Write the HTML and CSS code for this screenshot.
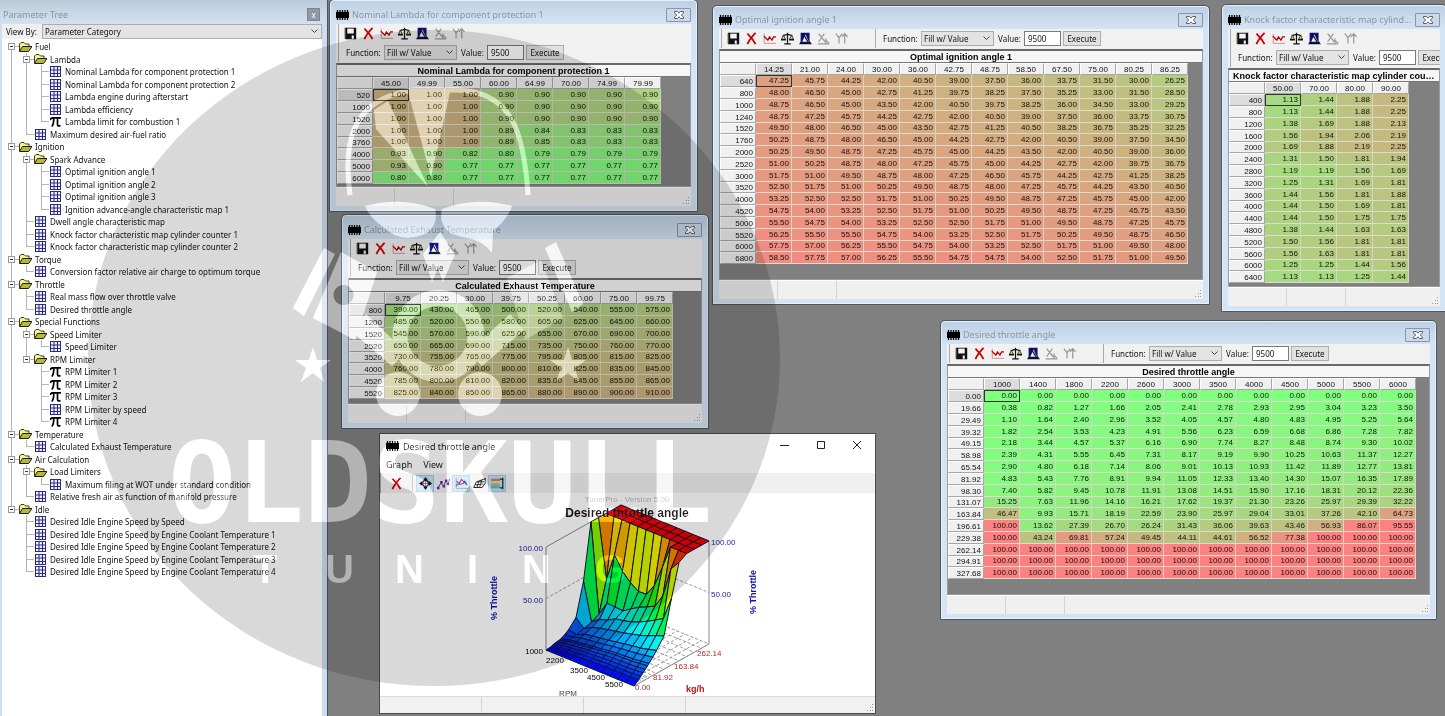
FILE: index.html
```html
<!DOCTYPE html>
<html lang="en">
<head>
  <meta charset="UTF-8" />
  <meta name="viewport" content="width=device-width, initial-scale=1.0"/>
  <title>TunerPro – Parameter Tree</title>
  <link rel="stylesheet" href="styles.css">
</head>
<body>

  <!-- icon set -->
  <svg class="sprite" aria-hidden="true">
    <symbol id="i-chip" viewBox="0 0 13 10"><path d="M0 2h13v6H0z"/><path d="M1.500 0v10M4 0v10M6.500 0v10M9 0v10M11.500 0v10" stroke="#000" stroke-width="1.300"/></symbol>
    <symbol id="i-save" viewBox="0 0 16 16"><path d="M1 1h14v14H2l-1-1z" fill="#111"/><path d="M4 2h8v6H4z" fill="#f4f4f4"/><path d="M1.500 2v12" stroke="#77772a"/><path d="M9.500 10.500h2.500v4H9.500z" fill="#fff"/></symbol>
    <symbol id="i-del" viewBox="0 0 16 16"><path d="M3 2c3 3 7 7 10 13M13 1C9 5 5 10 3 15" fill="none" stroke="#c80000" stroke-width="2.200"/></symbol>
    <symbol id="i-graph" viewBox="0 0 16 16"><path d="M1.500 2v12H16" fill="none" stroke="#c08080"/><path d="M1 5l3 3 2 2 2-4 3 4 2-4h3" fill="none" stroke="#b00000" stroke-width="1.500"/></symbol>
    <symbol id="i-scale" viewBox="0 0 16 16"><path d="M8 1v13M4 14.500h8M2 4.500l6-1.500 6 1.500" fill="none" stroke="#111" stroke-width="1.500"/><path d="M3 4L.5 9h5zM13 4l-2.500 5h5z" fill="#d8d878" stroke="#222"/><path d="M0 9.500h6M10 9.500h6" stroke="#111" stroke-width="2"/></symbol>
    <symbol id="i-metro" viewBox="0 0 16 16"><path d="M2 1h11v10l3 4H0l2-3z" fill="#101070"/><path d="M8 3l4 9H4z" fill="#f0f0fa"/><path d="M5 2l6 10" stroke="#111" stroke-width="1.500"/><path d="M2 13.500h12" stroke="#111" stroke-width="2"/></symbol>
    <symbol id="i-xaxis" viewBox="0 0 16 16"><path d="M2 2l8 10M9 2L2 12M1 14.500h14M11 8v6M11 10l4 4" fill="none" stroke="#979797" stroke-width="1.500"/></symbol>
    <symbol id="i-yaxis" viewBox="0 0 16 16"><path d="M1 2l4 5 4-5M5 7v7M12 14V3M8.500 6L12 2l3.500 4" fill="none" stroke="#979797" stroke-width="1.500"/></symbol>
    <symbol id="i-move" viewBox="0 0 16 16"><path d="M8 0l3 4H5zM8 16l3-4H5zM0 8l4-3v6zM16 8l-4-3v6z" fill="#111"/><circle cx="8" cy="8" r="3.500" fill="#fff" stroke="#111" stroke-width="1.500"/><path d="M8 5v6M5 8h6" stroke="#a02040"/></symbol>
    <symbol id="i-dots" viewBox="0 0 16 16"><path d="M1 14l4-7 3 5 3-8 2 5 3-7" fill="none" stroke="#7a2a8a" stroke-width="1.200"/><path d="M0 12h3v3H0zM4 5h3v3H4zM7 10h3v3H7zM10 3h3v3h-3zM12 7h3v3h-3z" fill="#5a2a9a"/></symbol>
    <symbol id="i-trace" viewBox="0 0 16 16"><path d="M1.500 1v13H16" fill="none" stroke="#666"/><path d="M1 11l4-3 3-5 3 3 3 3" fill="none" stroke="#b0204a" stroke-width="1.500"/><path d="M2 5l4 4 4-1 2-3 3 5" fill="none" stroke="#2a3ab0" stroke-width="1.500"/></symbol>
    <symbol id="i-mesh" viewBox="0 0 16 16"><path d="M4 6L15 2v6L11 13H1zM2 9.500l11-1M7 5l-2 8M11 3.500L8 13M4 6l10 0" fill="none" stroke="#222" stroke-width="1.300"/></symbol>
    <symbol id="i-legend" viewBox="0 0 16 16"><path d="M0 2h11v3H0z" fill="#d87878"/><path d="M0 5h11v3H0z" fill="#e6d870"/><path d="M0 8h11v3H0z" fill="#78cc88"/><path d="M0 11h11v3H0z" fill="#78a8dc"/><path d="M14.500 1v14M11 2.500h4M11 13.500h4" stroke="#222" stroke-width="1.500"/></symbol>
    <symbol id="i-close" viewBox="0 0 10 8"><path d="M.5 .5h3L5 2.200 6.500.5h3v1.500L7.200 4l2.300 2v1.500h-3L5 5.800 3.500 7.500h-3V6l2.300-2L.5 2z" fill="#fff" stroke="#555f6c"/></symbol>
    <symbol id="i-folder" viewBox="0 0 13 10"><path d="M.5 9V2L2 .5h3L6.500 2H10v2" fill="#f4f48a" stroke="#3c3c20"/><path d="M.5 9.500L3.500 4.500H13L9.500 9.500z" fill="#b8b83c" stroke="#1c1c10"/></symbol>
    <symbol id="i-table" viewBox="0 0 11 11"><path d="M0 0h11v11H0z" fill="#f2f2ff"/><path d="M.5 0v11M4 0v11M7.500 0v11" stroke="#1c1c9c"/><path d="M0 .5h11M0 4h11M0 7.500h11M0 10.500h11M10.500 0v11" stroke="#2c2c7c"/></symbol>
    <symbol id="i-pi" viewBox="0 0 11 11"><path d="M0 4C.8 1.800 1.500 1.800 3 1.800h8M3.800 2.500c0 4-.3 6-2 8M7.500 2.500V8c0 2 1 2.500 3 1.500" fill="none" stroke="#000" stroke-width="1.700"/></symbol>
    <symbol id="i-size" viewBox="0 0 8 8"><path d="M6 0h1v1H6zM4 3h1v1H4zM6 3h1v1H6zM1 6h1v1H1zM4 6h1v1H4zM6 6h1v1H6z" fill="#999"/></symbol>
  </svg>

  <aside class="tree-panel">
    <header class="tree-title">
      <h1>Parameter Tree</h1>
      <button type="button" aria-label="Close parameter tree">x</button>
    </header>
    <div class="view-by">
      <label for="viewBy">View By:</label>
      <select id="viewBy"><option>Parameter Category</option></select>
    </div>
    <ul class="tree" id="tree"></ul>
  </aside>

  <main class="desktop">
    <section class="window win-lambda" data-map="lambda"></section>
    <section class="window win-exhaust" data-map="exhaust"></section>
    <section class="window win-ignition wide" data-map="ignition"></section>
    <section class="window win-knock" data-map="knock"></section>
    <section class="window win-throttle wide" data-map="throttle"></section>

    <section class="graph-window">
      <header class="graph-title">
        <svg class="chip"><use href="#i-chip"/></svg>
        <h2>Desired throttle angle</h2>
        <button type="button" aria-label="Minimize"><svg viewBox="0 0 10 10"><path d="M0 5.500h9"/></svg></button>
        <button type="button" aria-label="Maximize"><svg viewBox="0 0 10 10"><path d="M1.500 1.500h7v7h-7z"/></svg></button>
        <button type="button" aria-label="Close"><svg viewBox="0 0 10 10"><path d="M1 1l8 8M9 1L1 9"/></svg></button>
      </header>
      <nav class="graph-menu"><a href="#graph">Graph</a><a href="#view">View</a></nav>
      <div class="graph-tools">
        <button type="button" aria-label="Close graph"><svg><use href="#i-del"/></svg></button>
        <span class="grip"></span>
        <button type="button" class="on" aria-label="Move"><svg><use href="#i-move"/></svg></button>
        <button type="button" aria-label="Points"><svg><use href="#i-dots"/></svg></button>
        <button type="button" class="on" aria-label="Trace"><svg><use href="#i-trace"/></svg></button>
        <button type="button" aria-label="Mesh"><svg><use href="#i-mesh"/></svg></button>
        <button type="button" class="on" aria-label="Colors"><svg><use href="#i-legend"/></svg></button>
      </div>
      <svg class="plot" id="plot" viewBox="0 0 495 203">
        <text class="version" x="247" y="9">TunerPro - Version 5.00</text>
        <g id="axes"></g>
        <g id="surface"></g>
        <text class="plot-title" x="247" y="24">Desired throttle angle</text>
        <g class="blue">
          <text class="end" x="163" y="58">100.00</text>
          <text class="end" x="163" y="110">50.00</text>
          <text x="331" y="52">100.00</text>
          <text x="331" y="104">50.00</text>
          <text class="axis-name" transform="translate(117 105) rotate(-90)">% Throttle</text>
          <text class="axis-name" transform="translate(376 99) rotate(-90)">% Throttle</text>
        </g>
        <g class="black">
          <text class="end" x="163" y="161">1000</text>
          <text class="mid" x="175" y="170">2200</text>
          <text class="mid" x="199" y="180">3500</text>
          <text class="mid" x="216" y="187">4500</text>
          <text class="mid" x="234" y="194">5500</text>
          <text class="mid rpm" x="188" y="203">RPM</text>
        </g>
        <g class="red">
          <text x="255" y="197">0.00</text>
          <text x="273" y="187">81.92</text>
          <text x="294" y="176">163.84</text>
          <text x="317" y="163">262.14</text>
          <text class="kgh" x="306" y="199">kg/h</text>
        </g>
      </svg>
      <footer class="graph-status"><span></span><span></span><span></span><svg class="size"><use href="#i-size"/></svg></footer>
    </section>
  </main>

  <!-- brand watermark over the whole screen: dark disc, then the light artwork -->
  <svg class="watermark disc" viewBox="88 30 692 656" aria-hidden="true">
    <mask id="holes" maskUnits="userSpaceOnUse" x="88" y="30" width="692" height="656">
      <rect x="88" y="30" width="692" height="656" fill="#fff"/>
      <use href="#brand" fill="#000" stroke="#000"/>
    </mask>
    <ellipse cx="434" cy="358" rx="346" ry="328" mask="url(#holes)"/>
  </svg>
  <svg class="watermark artwork" viewBox="88 30 692 656" aria-label="Oldskull Tuning">
    <g id="brand">
      <path d="M350 195C344 150 346 98 415 90H458C512 92 524 132 528 195" fill="none" stroke-width="5"/>
      <g stroke="none">
        <path d="M374 110l14-9 40 86-52-58zM408 92h42l-19 85z"/>
        <path d="M365 206q36-10 70 3 4 14-8 24-26 12-45-7-12-8-17-20zM512 206q-36-10-70 3-4 14 8 24l12 4q20 2 30 16l1-22q15-12 19-25z"/>
        <path d="M440 232l15 22-12 28-5-14-6 14-9-28z"/>
        <path d="M324 248l11 6-31 62-11-8zM545 248l11-6 27 62-11 8z"/>
        <path fill-rule="evenodd" d="M341 252l36 20-22 68-42-22zM343 285a10 10 0 1 0 1 0z"/>
        <path d="M541 260l-34 18 18 62 38-22z" opacity=".6"/>
        <path d="M350 330l16-16 40 38-14 14zM524 330l-14-16-42 38 14 14z"/>
        <path fill-rule="evenodd" d="M438 290a46 46 0 1 0 1 0zM438 306a30 30 0 1 1-1 0z"/>
        <circle cx="398" cy="394" r="22"/>
        <circle cx="480" cy="394" r="22"/>
        <path d="M313 347l4 13h14l-11 8 4 14-11-9-12 9 5-14-11-8h14zM568 347l4 13h14l-11 8 4 14-11-9-12 9 5-14-11-8h14z"/>
        <text class="oldskull" x="168" y="522">OLDSKULL</text>
        <text class="tuning" x="253 325 395 467 522 595" y="583">TUNING</text>
      </g>
    </g>
  </svg>

  <template id="mapWindow">
    <header class="window-title">
      <svg class="chip"><use href="#i-chip"/></svg>
      <h2></h2>
      <button type="button" aria-label="Close window"><svg><use href="#i-close"/></svg></button>
    </header>
    <div class="toolbars">
      <div class="toolbar icons">
        <button type="button" aria-label="Save"><svg><use href="#i-save"/></svg></button>
        <button type="button" aria-label="Discard"><svg><use href="#i-del"/></svg></button>
        <button type="button" aria-label="Graph"><svg><use href="#i-graph"/></svg></button>
        <button type="button" aria-label="Compare"><svg><use href="#i-scale"/></svg></button>
        <button type="button" aria-label="Trace"><svg><use href="#i-metro"/></svg></button>
        <button type="button" aria-label="X axis"><svg><use href="#i-xaxis"/></svg></button>
        <button type="button" aria-label="Y axis"><svg><use href="#i-yaxis"/></svg></button>
      </div>
      <div class="toolbar function">
        <label class="fn-label">Function:</label>
        <select><option>Fill w/ Value</option></select>
        <label class="value-label">Value:</label>
        <input type="text" value="9500">
        <button type="button" class="execute">Execute</button>
      </div>
    </div>
    <div class="grid">
      <h3></h3>
      <table><thead></thead><tbody></tbody></table>
    </div>
    <footer class="status"><span></span><span></span><svg class="size"><use href="#i-size"/></svg></footer>
  </template>

  <script src="script.js"></script>
</body>
</html>
```

FILE: styles.css
```css
* { box-sizing: border-box; margin: 0; padding: 0; }

body {
  display: flex;
  position: relative;
  min-height: 100vh;
  overflow: hidden;
  background: #808080;
  color: #111;
  font-family: "Noto Sans", "Open Sans", sans-serif;
  font-size: 8px;
}

button, input, select { font: inherit; color: inherit; }
button { border: none; background: none; }
h1, h2, h3 { font-weight: normal; }
.sprite { position: absolute; width: 0; height: 0; }

/* Parameter tree */
.tree-panel {
  display: flex;
  flex-direction: column;
  flex: none;
  width: 328px;
  padding: 0 5px 0 2px;
  background: #cfdeee;
  border-right: 1px solid #4c5460;
}

.tree-title {
  display: flex;
  align-items: center;
  justify-content: space-between;
  height: 24px;
  margin: 0 -5px 0 -2px;
  padding: 4px 7px 0 3px;
  background: linear-gradient(#bccbdb, #d3e1f0);
}

.tree-title h1 { color: #8a949f; font-size: 9px; }

.tree-title button {
  width: 13px;
  height: 13px;
  background: #8f98a3;
  border: 1px solid #7b8490;
  color: #fff;
  line-height: 9px;
}

.view-by { display: flex; align-items: center; height: 15px; background: #f0f0f0; }
.view-by label { width: 40px; padding-left: 4px; }

select {
  appearance: none;
  height: 15px;
  padding: 0 2px;
  border: 1px solid #adadad;
  border-radius: 0;
  background: #e3e3e3 url("data:image/svg+xml,%3Csvg xmlns='http://www.w3.org/2000/svg' width='7' height='5'%3E%3Cpath d='M.5 .5l3 3 3-3' fill='none' stroke='%23444'/%3E%3C/svg%3E") no-repeat right 3px center;
}

.view-by select { flex: 1; }

.tree { flex: 1; padding-top: 1px; background: #fff; list-style: none; }
.tree li { display: flex; align-items: center; height: 12px; padding-left: 2px; white-space: nowrap; }
.tree li:nth-child(odd) { height: 13px; }

.tree a { color: #111; text-decoration: none; padding-left: 4px; }
.tree svg { width: 11px; height: 11px; flex: none; margin-left: 1px; }
.tree svg.folder { width: 13px; height: 10px; margin: 0 -1px 0 0; }

.guide {
  display: flex;
  align-items: center;
  flex: none;
  width: 15px;
  height: 100%;
  padding-left: 4px;
  background-repeat: no-repeat;
}
.guide.line { background-image: linear-gradient(#b4b4b4, #b4b4b4); background-size: 1px 100%; background-position: 7px 0; }
.guide.tee, .guide.elbow, .guide.start {
  background-image: linear-gradient(#b4b4b4, #b4b4b4), linear-gradient(#b4b4b4, #b4b4b4);
  background-size: 1px 100%, 8px 1px;
  background-position: 7px 0, 7px 50%;
}
.guide.elbow { background-size: 1px 50%, 8px 1px; }
.guide.start { background-size: 1px 50%, 8px 1px; background-position: 7px 100%, 7px 50%; }

.toggle {
  width: 7px;
  height: 7px;
  background: linear-gradient(#333, #333) center / 3px 1px no-repeat #fff;
  border: 1px solid #9a9a9a;
}

/* Map windows */
.desktop { position: relative; flex: 1; min-width: 0; }

.window {
  position: absolute;
  display: flex;
  flex-direction: column;
  padding: 0 6px 5px;
  background: linear-gradient(#bccfe3, #d5e4f4 24px, #d5e4f4);
  border: 1px solid #4c5662;
  border-radius: 5px 5px 1px 1px;
  box-shadow: inset 0 0 0 1px #e6f0fa;
}

.win-lambda { left: 1px; top: -1px; width: 369px; height: 213px; }
.win-exhaust { left: 13px; top: 214px; width: 368px; height: 215px; }
.win-ignition { left: 384px; top: 5px; width: 498px; height: 300px; }
.win-knock { left: 893px; top: 4px; width: 226px; height: 308px; }
.win-throttle { left: 612px; top: 320px; width: 497px; height: 300px; }

.chip { width: 13px; height: 10px; flex: none; }

.window-title { display: flex; align-items: center; height: 23px; padding-top: 5px; gap: 3px; }
.win-lambda .window-title, .win-exhaust .window-title, .win-knock .window-title { height: 24px; }
.window-title h2 {
  flex: 1;
  overflow: hidden;
  color: #8b97a5;
  font-size: 9px;
  line-height: 12px;
  white-space: nowrap;
  text-overflow: ellipsis;
}
.window-title button {
  display: flex;
  align-items: center;
  justify-content: center;
  width: 25px;
  height: 14px;
  border: 1px solid #8796a8;
  border-radius: 1px;
  background: #c9d9ea;
}
.window-title button svg { width: 10px; height: 8px; }

.toolbars { padding-bottom: 1px; background: #f1f1f1; overflow: hidden; }
.wide .toolbars { display: flex; }
.toolbar { display: flex; align-items: center; flex: none; height: 19px; margin-left: 2px; padding-left: 2px; border-left: 1px solid #a8a8a8; }
.wide .icons { width: 152px; }
.icons button, .graph-tools button { display: flex; align-items: center; justify-content: center; width: 18px; height: 17px; flex: none; }
.icons svg, .graph-tools svg { width: 13px; height: 13px; }

.function { padding-left: 7px; white-space: nowrap; }
.function > * { flex: none; }
.fn-label { width: 38px; }
.function select { width: 73px; }
.value-label { width: 30px; padding-left: 4px; }
.function input { width: 37px; height: 15px; padding: 0 3px; border: 1px solid #7a7a7a; background: #fff; }
.execute { width: 38px; height: 15px; margin-left: 2px; border: 1px solid #adadad; background: #e1e1e1; line-height: 12px; }

.grid {
  flex: 1;
  overflow: hidden;
  background: #808080;
  border: 1px solid #9a9a9a;
  border-top: 2px solid #6a6a6a;
  font-family: "Liberation Sans", Arial, sans-serif;
}

.grid h3 {
  height: 12px;
  overflow: hidden;
  padding: 0 4px;
  background: #f6f6f6;
  border-bottom: 1px solid #777;
  color: #000;
  font-size: 9px;
  font-weight: bold;
  line-height: 12px;
  text-align: center;
  white-space: nowrap;
  text-overflow: ellipsis;
}

.grid table { border-collapse: separate; border-spacing: 0; table-layout: fixed; width: min-content; }
.grid th, .grid td { width: 36px; height: 12px; padding: 0 2px 0 0; line-height: 10px; text-align: right; font-weight: normal; white-space: nowrap; }
.grid tbody tr:nth-child(5n) > * { height: 11px; }
.grid th { background: #f0f0f0; border: 1px solid; border-color: #fdfdfd #a6a6a6 #a6a6a6 #fdfdfd; line-height: 9px; }
.grid thead th { text-align: center; padding: 0; }
.grid td { border-right: 1px solid #d4d4c8; border-bottom: 1px solid #dcdcd0; }
.grid .current { border: 1px solid #333; }
.grid th.marked { background: #dcdcdc; }

.status, .graph-status { display: flex; height: 19px; background: #f0f0f0; border-top: 1px solid #fff; }
.status span { width: 59px; border-right: 1px solid #d4d4d4; }
.size { width: 8px; height: 8px; margin: auto 1px 1px auto; }

/* 3D graph window */
.graph-window {
  position: absolute;
  left: 51px;
  top: 433px;
  width: 497px;
  display: flex;
  flex-direction: column;
  background: #fff;
  border: 1px solid #4a4a4a;
}

.graph-title { display: flex; align-items: center; height: 24px; padding: 0 2px 0 6px; gap: 4px; }
.graph-title h2 { flex: 1; font-size: 9px; }
.graph-title button { width: 32px; height: 22px; }
.graph-title button svg { width: 10px; height: 10px; fill: none; stroke: #222; }

.graph-menu { display: flex; gap: 11px; height: 15px; padding-left: 6px; font-size: 9px; line-height: 14px; }
.graph-menu a { color: #222; text-decoration: none; }

.graph-tools { display: flex; align-items: center; height: 20px; padding-left: 6px; background: #f0f0f0; border-left: 1px solid #a8a8a8; }
.grip { width: 1px; height: 16px; margin: 0 3px 0 7px; background: #a8a8a8; }
.graph-tools .on { background: #c4e0f5; border: 1px solid #a4cbe8; }

.plot { display: block; width: 100%; font-family: "Liberation Sans", Arial, sans-serif; font-size: 8px; }
.plot .end { text-anchor: end; }
.plot .mid, .plot .axis-name, .plot-title, .version { text-anchor: middle; }
.version { fill: #b8b8b8; }
.plot-title { font-size: 12px; font-weight: bold; fill: #1a1010; }
.plot .blue { fill: #2222a0; }
.plot .red { fill: #b02a2a; }
.plot .axis-name, .plot .kgh { font-size: 9px; font-weight: bold; }
.plot .axis-name { fill: #1010b0; }
.plot .kgh { fill: #c01010; }
.plot .rpm { fill: #444; }
.frame-line { fill: none; stroke: #888; }
.dash { fill: none; stroke: #999; stroke-dasharray: 3 2; }
#surface polygon { stroke: #141430; stroke-width: 1; stroke-linejoin: round; }

.graph-status { height: 17px; background: #f1f1f1; border-top: 1px solid #dcdcdc; }
.graph-status span { width: 102px; border-right: 1px solid #d4d4d4; }

/* Watermark */
.watermark {
  position: absolute;
  left: 88px;
  top: 30px;
  width: 692px;
  height: 656px;
  pointer-events: none;
}
.disc { fill: rgba(0, 0, 0, 0.15); }
.artwork { fill: #fff; stroke: #fff; opacity: 0.4; mix-blend-mode: overlay; }
.oldskull { font-family: "DejaVu Sans Mono", "Liberation Mono", monospace; font-size: 113px; font-weight: bold; }
.tuning { font-family: "Liberation Sans", Arial, sans-serif; font-size: 40px; font-weight: bold; }
```

FILE: script.js
```js
// level, icon, name
const treeItems = [
  [0, 'folder', 'Fuel'],
  [1, 'folder', 'Lambda'],
  [2, 'table', 'Nominal Lambda for component protection 1'],
  [2, 'table', 'Nominal Lambda for component protection 2'],
  [2, 'table', 'Lambda engine during afterstart'],
  [2, 'table', 'Lambda efficiency'],
  [2, 'pi', 'Lambda limit for combustion 1'],
  [1, 'table', 'Maximum desired air-fuel ratio'],
  [0, 'folder', 'Ignition'],
  [1, 'folder', 'Spark Advance'],
  [2, 'table', 'Optimal ignition angle 1'],
  [2, 'table', 'Optimal ignition angle 2'],
  [2, 'table', 'Optimal ignition angle 3'],
  [2, 'table', 'Ignition advance-angle characteristic map 1'],
  [1, 'table', 'Dwell angle characteristic map'],
  [1, 'table', 'Knock factor characteristic map cylinder counter 1'],
  [1, 'table', 'Knock factor characteristic map cylinder counter 2'],
  [0, 'folder', 'Torque'],
  [1, 'table', 'Conversion factor relative air charge to optimum torque'],
  [0, 'folder', 'Throttle'],
  [1, 'table', 'Real mass flow over throttle valve'],
  [1, 'table', 'Desired throttle angle'],
  [0, 'folder', 'Special Functions'],
  [1, 'folder', 'Speed Limiter'],
  [2, 'table', 'Speed Limiter'],
  [1, 'folder', 'RPM Limiter'],
  [2, 'pi', 'RPM Limiter 1'],
  [2, 'pi', 'RPM Limiter 2'],
  [2, 'pi', 'RPM Limiter 3'],
  [2, 'table', 'RPM Limiter by speed'],
  [2, 'pi', 'RPM Limiter 4'],
  [0, 'folder', 'Temperature'],
  [1, 'table', 'Calculated Exhaust Temperature'],
  [0, 'folder', 'Air Calculation'],
  [1, 'folder', 'Load Limiters'],
  [2, 'table', 'Maximum filing at WOT under standard condition'],
  [1, 'table', 'Relative fresh air as function of manifold pressure'],
  [0, 'folder', 'Idle'],
  [1, 'table', 'Desired Idle Engine Speed by Speed'],
  [1, 'table', 'Desired Idle Engine Speed by Engine Coolant Temperature 1'],
  [1, 'table', 'Desired Idle Engine Speed by Engine Coolant Temperature 2'],
  [1, 'table', 'Desired Idle Engine Speed by Engine Coolant Temperature 3'],
  [1, 'table', 'Desired Idle Engine Speed by Engine Coolant Temperature 4']
];

// low / high are the ends of the green to red scale
const maps = {
  lambda: {
    title: 'Nominal Lambda for component protection 1',
    low: 0.75, high: 1.17,
    cols: '45.00 49.99 55.00 60.00 64.99 70.00 74.99 79.99',
    rows: [
      '520 1.00 1.00 1.00 0.90 0.90 0.90 0.90 0.90',
      '1000 1.00 1.00 1.00 0.90 0.90 0.90 0.90 0.90',
      '1520 1.00 1.00 1.00 0.90 0.90 0.90 0.90 0.90',
      '2000 1.00 1.00 1.00 0.89 0.84 0.83 0.83 0.83',
      '3760 1.00 1.00 1.00 0.89 0.85 0.83 0.83 0.83',
      '4000 0.93 0.90 0.82 0.80 0.79 0.79 0.79 0.79',
      '5000 0.93 0.90 0.77 0.77 0.77 0.77 0.77 0.77',
      '6000 0.80 0.80 0.77 0.77 0.77 0.77 0.77 0.77'
    ]
  },
  exhaust: {
    title: 'Calculated Exhaust Temperature',
    low: 0, high: 1500,
    cols: '9.75 20.25 30.00 39.75 50.25 60.00 75.00 99.75',
    rows: [
      '800 390.00 430.00 465.00 500.00 520.00 540.00 555.00 575.00',
      '1200 485.00 520.00 550.00 580.00 605.00 625.00 645.00 660.00',
      '1520 545.00 570.00 590.00 625.00 655.00 670.00 690.00 700.00',
      '2520 650.00 665.00 690.00 715.00 735.00 750.00 760.00 770.00',
      '3520 730.00 755.00 765.00 775.00 795.00 805.00 815.00 825.00',
      '4000 760.00 780.00 790.00 800.00 810.00 825.00 835.00 845.00',
      '4520 785.00 800.00 810.00 820.00 835.00 845.00 855.00 865.00',
      '5520 825.00 840.00 850.00 865.00 880.00 890.00 900.00 910.00'
    ]
  },
  ignition: {
    title: 'Optimal ignition angle 1',
    low: 0, high: 64,
    cols: '14.25 21.00 24.00 30.00 36.00 42.75 48.75 58.50 67.50 75.00 80.25 86.25',
    rows: [
      '640 47.25 45.75 44.25 42.00 40.50 39.00 37.50 36.00 33.75 31.50 30.00 26.25',
      '800 48.00 46.50 45.00 42.75 41.25 39.75 38.25 37.50 35.25 33.00 31.50 28.50',
      '1000 48.75 46.50 45.00 43.50 42.00 40.50 39.75 38.25 36.00 34.50 33.00 29.25',
      '1240 48.75 47.25 45.75 44.25 42.75 42.00 40.50 39.00 37.50 36.00 33.75 30.75',
      '1520 49.50 48.00 46.50 45.00 43.50 42.75 41.25 40.50 38.25 36.75 35.25 32.25',
      '1760 50.25 48.75 48.00 46.50 45.00 44.25 42.75 42.00 40.50 39.00 37.50 34.50',
      '2000 50.25 49.50 48.75 47.25 45.75 45.00 44.25 43.50 42.00 40.50 39.00 36.00',
      '2520 51.00 50.25 48.75 48.00 47.25 45.75 45.00 44.25 42.75 42.00 39.75 36.75',
      '3000 51.75 51.00 49.50 48.75 48.00 47.25 46.50 45.75 44.25 42.75 41.25 38.25',
      '3520 52.50 51.75 51.00 50.25 49.50 48.75 48.00 47.25 45.75 44.25 43.50 40.50',
      '4000 53.25 52.50 52.50 51.75 51.00 50.25 49.50 48.75 47.25 45.75 45.00 42.00',
      '4520 54.75 54.00 53.25 52.50 51.75 51.00 50.25 49.50 48.75 47.25 45.75 43.50',
      '5000 55.50 54.75 54.00 53.25 52.50 52.50 51.75 51.00 49.50 48.75 47.25 45.75',
      '5520 56.25 55.50 55.50 54.75 54.00 53.25 52.50 51.75 50.25 49.50 48.75 46.50',
      '6000 57.75 57.00 56.25 55.50 54.75 54.00 53.25 52.50 51.75 51.00 49.50 48.00',
      '6800 58.50 57.75 57.00 56.25 55.50 54.75 54.75 54.00 52.50 51.75 51.00 49.50'
    ]
  },
  knock: {
    title: 'Knock factor characteristic map cylinder counter 1',
    low: 0, high: 4,
    cols: '50.00 70.00 80.00 90.00',
    rows: [
      '400 1.13 1.44 1.88 2.25',
      '800 1.13 1.44 1.88 2.25',
      '1200 1.38 1.69 1.88 2.13',
      '1600 1.56 1.94 2.06 2.19',
      '2000 1.69 1.88 2.19 2.25',
      '2400 1.31 1.50 1.81 1.94',
      '2800 1.19 1.19 1.56 1.69',
      '3200 1.25 1.31 1.69 1.81',
      '3600 1.44 1.56 1.81 1.88',
      '4000 1.44 1.50 1.69 1.81',
      '4400 1.44 1.50 1.75 1.75',
      '4800 1.38 1.44 1.63 1.63',
      '5200 1.50 1.56 1.81 1.81',
      '5600 1.56 1.63 1.81 1.81',
      '6000 1.25 1.25 1.44 1.56',
      '6400 1.13 1.13 1.25 1.44'
    ]
  },
  throttle: {
    title: 'Desired throttle angle',
    low: 0, high: 90,
    cols: '1000 1400 1800 2200 2600 3000 3500 4000 4500 5000 5500 6000',
    rows: [
      '0.00 0.00 0.00 0.00 0.00 0.00 0.00 0.00 0.00 0.00 0.00 0.00 0.00',
      '19.66 0.38 0.82 1.27 1.66 2.05 2.41 2.78 2.93 2.95 3.04 3.23 3.50',
      '29.49 1.10 1.64 2.40 2.96 3.52 4.05 4.57 4.80 4.83 4.95 5.25 5.64',
      '39.32 1.82 2.54 3.53 4.23 4.91 5.56 6.23 6.59 6.68 6.86 7.28 7.82',
      '49.15 2.18 3.44 4.57 5.37 6.16 6.90 7.74 8.27 8.48 8.74 9.30 10.02',
      '58.98 2.39 4.31 5.55 6.45 7.31 8.17 9.19 9.90 10.25 10.63 11.37 12.27',
      '65.54 2.90 4.80 6.18 7.14 8.06 9.01 10.13 10.93 11.42 11.89 12.77 13.81',
      '81.92 4.83 5.43 7.76 8.91 9.94 11.05 12.33 13.40 14.30 15.07 16.35 17.89',
      '98.30 7.40 5.82 9.45 10.78 11.91 13.08 14.51 15.90 17.16 18.31 20.12 22.36',
      '131.07 15.25 7.63 11.96 14.16 16.21 17.62 19.37 21.30 23.26 25.97 29.39 32.22',
      '163.84 46.47 9.93 15.71 18.19 22.59 23.90 25.97 29.04 33.01 37.26 42.10 64.73',
      '196.61 100.00 13.62 27.39 26.70 26.24 31.43 36.06 39.63 43.46 56.93 86.07 95.55',
      '229.38 100.00 43.24 69.81 57.24 49.45 44.11 44.61 56.52 77.38 100.00 100.00 100.00',
      '262.14 100.00 100.00 100.00 100.00 100.00 100.00 100.00 100.00 100.00 100.00 100.00 100.00',
      '294.91 100.00 100.00 100.00 100.00 100.00 100.00 100.00 100.00 100.00 100.00 100.00 100.00',
      '327.68 100.00 100.00 100.00 100.00 100.00 100.00 100.00 100.00 100.00 100.00 100.00 100.00'
    ]
  }
};

// true when another item of this level follows inside the same parent
function continues(index, level) {
  for (let i = index + 1; i < treeItems.length; i++) {
    if (treeItems[i][0] === level) return true;
    if (treeItems[i][0] < level) return false;
  }
  return false;
}

function loadTree() {
  const tree = document.getElementById('tree');
  treeItems.forEach(([level, icon, name], i) => {
    let html = '';
    for (let l = 0; l < level; l++) {
      html += `<span class="guide ${continues(i, l) ? 'line' : ''}"></span>`;
    }
    const branch = i === 0 ? 'start' : continues(i, level) ? 'tee' : 'elbow';
    const toggle = icon === 'folder' ? '<span class="toggle"></span>' : '';
    html += `<span class="guide ${branch}">${toggle}</span>`;
    html += `<svg class="${icon}"><use href="#i-${icon}"/></svg><a href="#item-${i}">${name}</a>`;
    const li = document.createElement('li');
    li.innerHTML = html;
    tree.appendChild(li);
  });
}

function cellColor(value, map) {
  const t = Math.max(0, Math.min(1, (value - map.low) / (map.high - map.low)));
  return `rgb(${Math.round(128 + 127 * t)},${Math.round(255 - 127 * t)},128)`;
}

function loadMap(win) {
  const key = win.dataset.map;
  const map = maps[key];
  win.appendChild(document.getElementById('mapWindow').content.cloneNode(true));
  win.querySelector('h2').textContent = map.title;
  win.querySelector('h3').textContent = map.title;

  win.querySelector('select').id = key + 'Function';
  win.querySelector('.fn-label').htmlFor = key + 'Function';
  win.querySelector('input').id = key + 'Value';
  win.querySelector('.value-label').htmlFor = key + 'Value';

  win.querySelector('thead').innerHTML = '<tr><th></th>' +
    map.cols.split(' ').map((c, i) => `<th class="${i ? '' : 'marked'}">${c}</th>`).join('') + '</tr>';

  win.querySelector('tbody').innerHTML = map.rows.map((row, r) => {
    const cells = row.split(' ');
    const head = cells.shift();
    return `<tr><th class="${r ? '' : 'marked'}">${head}</th>` + cells.map((v, c) =>
      `<td class="${r + c ? '' : 'current'}" style="background-color:${cellColor(Number(v), map)}">${v}</td>`
    ).join('') + '</tr>';
  }).join('');
}

// x = rpm column (0..1), y = load (0..1), z = throttle (0..1)
function project(x, y, z) {
  return [166 + 88 * x + 75 * y, 157 + 36 * x - 42 * y - 103 * z];
}

function drawLine(points, cls) {
  const d = points.map(p => project(...p).map(n => n.toFixed(1)).join(',')).join(' ');
  return `<polyline class="${cls}" points="${d}"/>`;
}

function drawPlot() {
  const rows = maps.throttle.rows.map(r => r.split(' ').map(Number));
  const load = rows.map(r => r[0] / 327.68);
  const z = rows.map(r => r.slice(1));
  const last = z[0].length - 1;

  let axes = drawLine([[0, 0, 0], [0, 0, 1], [0, 1, 1], [1, 1, 1], [1, 1, 0], [1, 0, 0]], 'frame-line');
  axes += drawLine([[0, 0, 0.5], [0, 1, 0.5], [1, 1, 0.5]], 'dash');
  load.forEach(y => { axes += drawLine([[0, y, 0], [1, y, 0]], 'dash'); });
  for (let c = 0; c <= last; c++) axes += drawLine([[c / last, 0, 0], [c / last, 1, 0]], 'dash');
  document.getElementById('axes').innerHTML = axes;

  // back to front
  let faces = '';
  for (let r = load.length - 2; r >= 0; r--) {
    for (let c = 0; c < last; c++) {
      const corners = [[r, c], [r, c + 1], [r + 1, c + 1], [r + 1, c]];
      const avg = corners.reduce((s, [i, j]) => s + z[i][j], 0) / 4;
      const points = corners.map(([i, j]) =>
        project(j / last, load[i], z[i][j] / 100).map(n => n.toFixed(1)).join(',')).join(' ');
      const hue = Math.round(240 - 2.4 * avg);
      faces += `<polygon points="${points}" fill="hsl(${hue},100%,48%)"/>`;
    }
  }
  document.getElementById('surface').innerHTML = faces;
}

loadTree();
document.querySelectorAll('.window').forEach(loadMap);
drawPlot();
```
